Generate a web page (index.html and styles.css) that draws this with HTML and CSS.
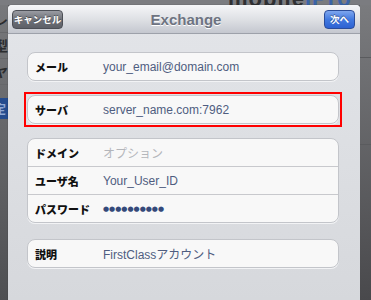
FILE: index.html
```html
<!DOCTYPE html>
<html lang="ja">
<head>
    <meta charset="UTF-8">
    <title>Exchange</title>
    <link rel="stylesheet" href="styles.css">
</head>
<body>
<div class="screen">
    <!-- 背景（モーダルの後ろ） -->
    <div class="backTop"><span class="backLogo">mobile<em>iPro</em></span></div>
    <div class="backLeft">
        <div class="backRow">レ</div>
        <div class="backRow">型</div>
        <div class="backRow">ヤ</div>
        <div class="backRow sel">定</div>
    </div>

    <div class="sheet">
        <div class="navbar">
            <div class="side"><button class="btn cancel">キャンセル</button></div>
            <h1 class="title">Exchange</h1>
            <div class="side right"><button class="btn next">次へ</button></div>
        </div>

        <div class="form">
            <div class="group">
                <div class="row"><span class="label">メール</span><span class="value">your_email@domain.com</span></div>
            </div>

            <div class="mark">
                <div class="group">
                    <div class="row"><span class="label">サーバ</span><span class="value">server_name.com:7962</span></div>
                </div>
            </div>

            <div class="group">
                <div class="row"><span class="label">ドメイン</span><span class="value hint">オプション</span></div>
                <div class="row"><span class="label">ユーザ名</span><span class="value">Your_User_ID</span></div>
                <div class="row"><span class="label">パスワード</span><span class="value dots">●●●●●●●●●●</span></div>
            </div>

            <div class="group last">
                <div class="row"><span class="label">説明</span><span class="value">FirstClassアカウント</span></div>
            </div>
        </div>
    </div>

    <div class="backRight">
        <div class="backCell"></div>
        <div class="backCell"></div>
        <div class="backCell"></div>
    </div>
</div>
</body>
</html>
```

FILE: styles.css
```css
* {
    margin: 0;
    padding: 0;
    box-sizing: border-box;
}
html, body {
    width: 371px;
    height: 300px;
    overflow: hidden;
}
body {
    background: #5c5d60;
    font-family: "Liberation Sans", "Noto Sans CJK JP", sans-serif;
}
.screen {
    display: grid;
    grid-template-columns: 8px 352px 11px;
    grid-template-rows: 5px 295px;
    height: 300px;
}

/* 背景 */
.backTop {
    grid-column: 1 / 4;
    overflow: hidden;
    background: #7b7c80;
    padding-left: 228px;
}
.backLogo {
    display: block;
    margin-top: -14px;
    font: bold 22px "Liberation Sans", sans-serif;
    color: #2f3033;
    letter-spacing: 1px;
}
.backLogo em {
    font-style: normal;
    color: #3a64a8;
}
.backLeft {
    background: linear-gradient(#77787b, #4e4f52);
    overflow: hidden;
    padding-top: 2px;
}
.backRow {
    height: 26px;
    font: bold 14px "Noto Sans CJK JP", sans-serif;
    color: #2b2c2e;
    text-indent: -6px;
    border-bottom: 1px solid #66676a;
    padding-top: 2px;
}
.backRow.sel {
    margin-top: 13px;
    height: 22px;
    background: #254c8e;
    color: #8fa8d4;
    font-size: 12px;
}
.backRight {
    background: linear-gradient(#7a7b7e, #49494c);
    display: flex;
    flex-direction: column;
}
.backCell {
    height: 52px;
    border-bottom: 1px solid #5a5b5e;
}
.backCell:first-child {
    height: 53px;
}
.backCell:nth-child(2) {
    height: 87px;
}

/* モーダル */
.sheet {
    background: linear-gradient(#e3e5e9, #d6d8dc);
    border-radius: 4px 4px 0 0;
    box-shadow: 0 0 1px rgba(0,0,0,0.6);
}
.navbar {
    height: 29px;
    display: grid;
    grid-template-columns: 1fr auto 1fr;
    align-items: center;
    padding: 0 5px 0 4px;
    background: linear-gradient(#f5f6f8, #dfe1e5 50%, #c4c7cf);
    border-bottom: 1px solid #9da1aa;
    border-radius: 4px 4px 0 0;
}
.side {
    display: flex;
}
.side.right {
    justify-content: flex-end;
}
.title {
    font: bold 15px "Liberation Sans", sans-serif;
    color: #6d7381;
    text-shadow: 0 1px 0 #fff;
    margin-left: 5px;
}
.btn {
    height: 19px;
    border-radius: 4px;
    font: bold 9.5px "Noto Sans CJK JP", sans-serif;
    color: #fff;
    text-shadow: 0 -1px 0 rgba(0,0,0,0.4);
    line-height: 17px;
    white-space: nowrap;
    padding: 0;
}
.cancel {
    width: 51px;
    background: linear-gradient(#9a9ca3, #6e7178 50%, #5d6068);
    border: 1px solid #4c4f56;
}
.next {
    width: 31px;
    background: linear-gradient(#7ea6ee, #4179e0 50%, #2d62d2);
    border: 1px solid #2b4d9a;
}

.form {
    padding: 18px 21px 0 19px;
}
.group {
    background: #f8f8f8;
    border: 1px solid #c3c5ca;
    border-radius: 8px;
    box-shadow: 0 1px 0 #f2f3f5;
    margin-bottom: 11px;
}
.group.last {
    margin-top: 16px;
}
.mark {
    border: 2px solid #f00;
    margin: 0 -3px 11px;
    padding: 1px;
}
.mark .group {
    margin-bottom: 0;
}
.row {
    height: 28px;
    display: flex;
    align-items: center;
    padding-left: 7px;
    border-top: 1px solid #c8c9cd;
}
.row:first-child {
    height: 27px;
    border-top: none;
}
.label {
    width: 68px;
    font: 900 11px "Noto Sans CJK JP", sans-serif;
    color: #111;
    white-space: nowrap;
}
.value {
    font-size: 12px;
    color: #4f5d80;
    white-space: nowrap;
}
.value.hint {
    color: #b4b6bb;
    font-family: "Noto Sans CJK JP", sans-serif;
}
.value.dots {
    font: 7px "DejaVu Sans", sans-serif;
    color: #34497a;
    letter-spacing: 0;
}
```
